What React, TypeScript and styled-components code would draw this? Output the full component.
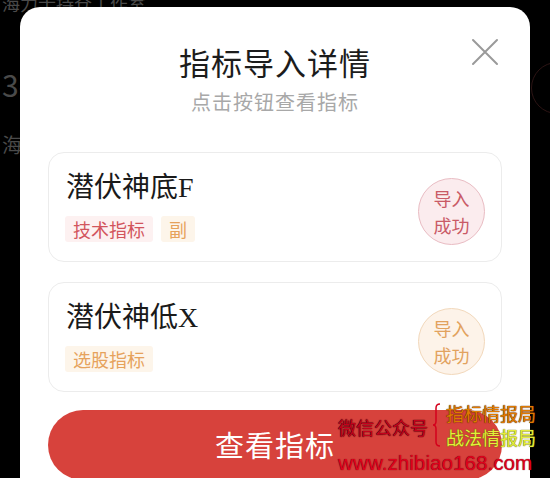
import React from "react";
import styled, { createGlobalStyle } from "styled-components";

const GlobalStyle = createGlobalStyle`
  html, body { margin: 0; padding: 0; background: #000; }
  body { font-family: "Noto Sans CJK SC", "Noto Sans", sans-serif; overflow: hidden; }
`;

const Screen = styled.div`
  position: relative;
  width: 550px;
  height: 478px;
  overflow: hidden;
  background: #000;
`;

const BgPage = styled.div`
  display: flex;
  justify-content: space-between;
  height: 100%;
`;

const BgColumn = styled.div`
  display: flex;
  flex-direction: column;
  color: #4a4a4a;
`;

const BgLine = styled.div<{ $size: number; $top: number }>`
  font-size: ${(p) => p.$size}px;
  line-height: ${(p) => p.$size + 4}px;
  margin-top: ${(p) => p.$top}px;
  margin-left: 2px;
  white-space: nowrap;
  font-family: "Noto Sans CJK SC", "DejaVu Sans", sans-serif;
`;

const BgRing = styled.div`
  width: 50px;
  height: 50px;
  margin-top: 62px;
  margin-right: -33px;
  border-radius: 50%;
  border: 1px solid #2c1414;
  flex-shrink: 0;
`;

const Modal = styled.div`
  position: absolute;
  left: 20px;
  top: 7px;
  width: 510px;
  height: 490px;
  background: #fff;
  border-radius: 20px 20px 0 0;
  display: flex;
  flex-direction: column;
  align-items: stretch;
  padding: 35px 28px 0;
  box-sizing: border-box;
`;

const Title = styled.h1`
  margin: 0;
  text-align: center;
  font-size: 31px;
  line-height: 40px;
  font-weight: 400;
  color: #1c1c1c;
  letter-spacing: 1px;
`;

const Subtitle = styled.p`
  margin: 6px 0 0;
  text-align: center;
  font-size: 20px;
  line-height: 28px;
  color: #a8a8a8;
  letter-spacing: 1px;
`;

const CloseButton = styled.button`
  position: absolute;
  right: 31px;
  top: 30px;
  width: 29px;
  height: 29px;
  padding: 0;
  border: none;
  background: transparent;
  display: flex;
  align-items: center;
  justify-content: center;
`;

const CardList = styled.div`
  display: flex;
  flex-direction: column;
  gap: 20px;
  margin-top: 36px;
`;

const Card = styled.div`
  height: 110px;
  box-sizing: border-box;
  border: 1px solid #ececec;
  border-radius: 16px;
  padding: 16px 16px 0 16px;
  display: flex;
  justify-content: space-between;
  align-items: flex-start;
`;

const CardInfo = styled.div`
  display: flex;
  flex-direction: column;
  gap: 9px;
`;

const CardTitle = styled.div`
  font-family: "Liberation Serif", "Noto Sans CJK SC", serif;
  font-size: 28px;
  line-height: 38px;
  color: #1a1a1a;
  padding-left: 1px;
`;

const TagRow = styled.div`
  display: flex;
  gap: 8px;
`;

const Tag = styled.span<{ $tone: "red" | "orange" }>`
  display: inline-block;
  padding: 0 8px;
  height: 26px;
  line-height: 26px;
  font-size: 18px;
  border-radius: 3px;
  color: ${(p) => (p.$tone === "red" ? "#d2555d" : "#e6a25c")};
  background: ${(p) => (p.$tone === "red" ? "#fdf1f1" : "#fdf5ea")};
`;

const Badge = styled.div<{ $tone: "red" | "orange" }>`
  width: 67px;
  height: 67px;
  box-sizing: border-box;
  border-radius: 50%;
  margin-top: 9px;
  display: flex;
  flex-direction: column;
  align-items: center;
  justify-content: center;
  font-size: 18px;
  line-height: 27px;
  color: ${(p) => (p.$tone === "red" ? "#c95a66" : "#e2a25e")};
  background: ${(p) => (p.$tone === "red" ? "#fbecee" : "#fdf3e9")};
  border: 1px solid ${(p) => (p.$tone === "red" ? "#e9bcc3" : "#f2d8bb")};
`;

const PrimaryButton = styled.button`
  margin-top: 18px;
  height: 70px;
  border: none;
  border-radius: 35px;
  background: #d7423c;
  color: #fff;
  font-family: "Noto Sans CJK SC", sans-serif;
  font-size: 29px;
  letter-spacing: 1px;
  flex-shrink: 0;
  padding: 0 0 2px;
`;

const Watermark = styled.div`
  position: absolute;
  left: 338px;
  top: 401px;
  display: grid;
  grid-template-columns: auto auto auto;
  grid-template-rows: auto auto auto;
  align-items: center;
  pointer-events: none;
`;

const WmLabel = styled.div`
  grid-row: 1 / span 2;
  font-size: 18px;
  line-height: 22px;
  color: #c4001c;
  text-shadow: 0 0 1px #3a0008, 0 0 1px #3a0008;
  margin-top: 4px;
`;

const WmBrace = styled.svg`
  grid-row: 1 / span 2;
  margin: 0 5px 0 4px;
`;

const WmLine = styled.div<{ $color: string; $edge: string }>`
  font-size: 18px;
  line-height: 24px;
  color: ${(p) => p.$color};
  text-shadow: 0 0 1px ${(p) => p.$edge}, 0 0 1px ${(p) => p.$edge};
  white-space: nowrap;
`;

const WmUrl = styled.div`
  grid-column: 1 / span 3;
  font-family: "Liberation Sans", Arial, sans-serif;
  font-size: 20.7px;
  line-height: 24px;
  color: #e0001c;
  text-shadow: 0 0 1px #50000a;
  white-space: nowrap;
  margin-top: 2px;
`;

const cards = [
  {
    title: "潜伏神底F",
    tags: [
      { label: "技术指标", tone: "red" as const },
      { label: "副", tone: "orange" as const },
    ],
    tone: "red" as const,
  },
  {
    title: "潜伏神低X",
    tags: [{ label: "选股指标", tone: "orange" as const }],
    tone: "orange" as const,
  },
];

export default function App() {
  return (
    <>
      <GlobalStyle />
      <Screen>
        <BgPage>
          <BgColumn>
            <BgLine $size={18} $top={-8}>海力士持仓工作室</BgLine>
            <BgLine $size={30} $top={53}>3-</BgLine>
            <BgLine $size={20} $top={32}>海</BgLine>
          </BgColumn>
          <BgRing />
        </BgPage>

        <Modal>
          <Title>指标导入详情</Title>
          <Subtitle>点击按钮查看指标</Subtitle>
          <CloseButton aria-label="关闭">
            <svg width="28" height="28" viewBox="0 0 28 28">
              <path d="M2 2 L26 26 M26 2 L2 26" stroke="#9a9a9a" strokeWidth="2" strokeLinecap="round" />
            </svg>
          </CloseButton>

          <CardList>
            {cards.map((c) => (
              <Card key={c.title}>
                <CardInfo>
                  <CardTitle>{c.title}</CardTitle>
                  <TagRow>
                    {c.tags.map((t) => (
                      <Tag key={t.label} $tone={t.tone}>
                        {t.label}
                      </Tag>
                    ))}
                  </TagRow>
                </CardInfo>
                <Badge $tone={c.tone}>
                  <span>导入</span>
                  <span>成功</span>
                </Badge>
              </Card>
            ))}
          </CardList>

          <PrimaryButton>查看指标</PrimaryButton>
        </Modal>

        <Watermark>
          <WmLabel>微信公众号</WmLabel>
          <WmBrace width="9" height="44" viewBox="0 0 9 44">
            <path
              d="M8 1 Q4 1 4 5 L4 18 Q4 22 1 22 Q4 22 4 26 L4 39 Q4 43 8 43"
              fill="none"
              stroke="#d4001c"
              strokeWidth="1.5"
            />
          </WmBrace>
          <WmLine $color="#e07a00" $edge="#5a2a00">指标情报局</WmLine>
          <WmLine $color="#e4ee3c" $edge="#6a6a00">战法情报局</WmLine>
          <WmUrl>www.zhibiao168.com</WmUrl>
        </Watermark>
      </Screen>
    </>
  );
}
